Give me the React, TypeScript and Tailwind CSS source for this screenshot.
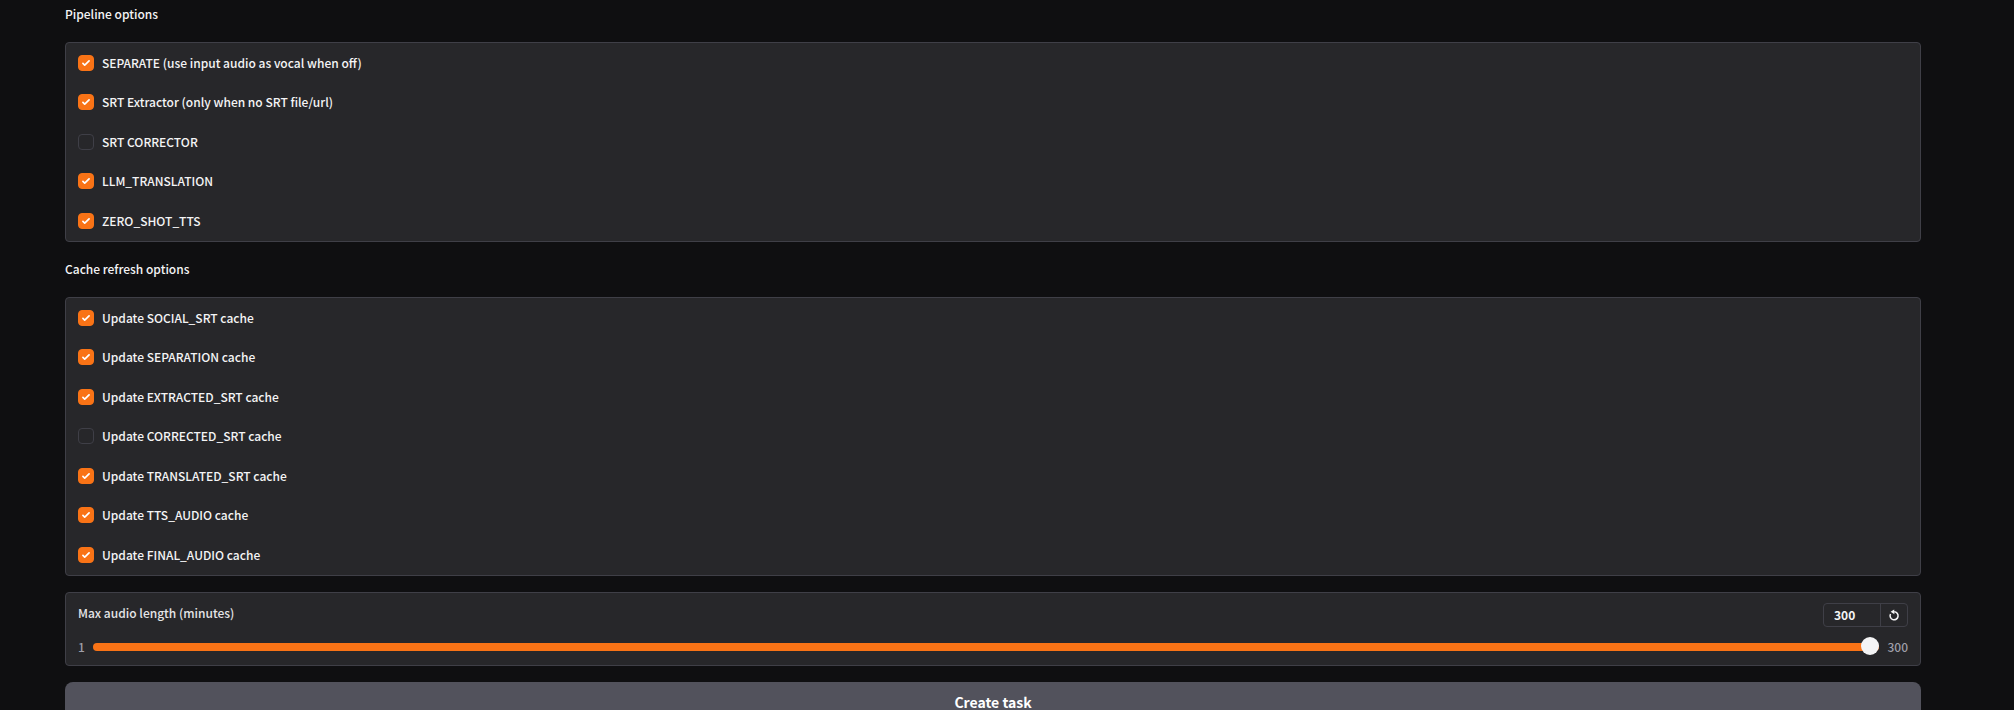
import { useState } from "react";
import type { CSSProperties } from "react";

type Option = { label: string; checked: boolean };

const pipelineOptions: Option[] = [
  { label: "SEPARATE (use input audio as vocal when off)", checked: true },
  { label: "SRT Extractor (only when no SRT file/url)", checked: true },
  { label: "SRT CORRECTOR", checked: false },
  { label: "LLM_TRANSLATION", checked: true },
  { label: "ZERO_SHOT_TTS", checked: true },
];

const cacheOptions: Option[] = [
  { label: "Update SOCIAL_SRT cache", checked: true },
  { label: "Update SEPARATION cache", checked: true },
  { label: "Update EXTRACTED_SRT cache", checked: true },
  { label: "Update CORRECTED_SRT cache", checked: false },
  { label: "Update TRANSLATED_SRT cache", checked: true },
  { label: "Update TTS_AUDIO cache", checked: true },
  { label: "Update FINAL_AUDIO cache", checked: true },
];

const MIN = 1;
const MAX = 300;

function CheckRow({ label, checked }: Option) {
  return (
    <label className="mb-[23px] flex h-4 items-center gap-2 last:mb-0 even:mb-6">
      <span className="grid size-4 place-items-center">
        <input
          type="checkbox"
          defaultChecked={checked}
          className="peer size-4 appearance-none rounded-sm border border-zinc-700 bg-zinc-800 [grid-area:1/1] checked:border-[#f97316] checked:bg-[#f97316]"
        />
        <svg
          viewBox="0 0 16 16"
          aria-hidden="true"
          className="pointer-events-none invisible size-[14px] fill-white [grid-area:1/1] peer-checked:visible"
        >
          <path d="M12.207 4.793a1 1 0 010 1.414l-5 5a1 1 0 01-1.414 0l-2-2a1 1 0 011.414-1.414L6.5 9.086l4.293-4.293a1 1 0 011.414 0z" />
        </svg>
      </span>
      <span className="pb-px">{label}</span>
    </label>
  );
}

function OptionGroup({ title, options }: { title: string; options: Option[] }) {
  return (
    <section>
      <h2 className="mb-[18px] leading-5 font-medium">{title}</h2>
      <div className="rounded border border-zinc-700 bg-[#27272a] p-3">
        {options.map((option) => (
          <CheckRow key={option.label} {...option} />
        ))}
      </div>
    </section>
  );
}

function ResetIcon() {
  return (
    <svg viewBox="0 0 12 12" aria-hidden="true" className="size-3" fill="none">
      <path d="M2.5 5A4 4 0 1 0 6.2 2.8" stroke="currentColor" strokeWidth="1.5" />
      <path d="M2.6 2.8 6.2 0.4 6.4 5.2Z" fill="currentColor" />
    </svg>
  );
}

function LengthSlider() {
  const [value, setValue] = useState(MAX);
  const fill = `${((value - MIN) / (MAX - MIN)) * 100}%`;
  return (
    <div className="mt-4 rounded border border-zinc-700 bg-[#27272a] px-3 pt-[10px] pb-2">
      <div className="flex items-start justify-between">
        <label htmlFor="max-length" className="leading-5 text-zinc-200">
          Max audio length (minutes)
        </label>
        <div className="flex h-6 overflow-hidden rounded border border-zinc-700">
          <input
            type="number"
            aria-label="Max audio length value"
            min={MIN}
            max={MAX}
            value={value}
            onChange={(e) => setValue(Number(e.target.value))}
            className="w-14 [appearance:textfield] bg-transparent pl-[10px] font-bold outline-none [&::-webkit-inner-spin-button]:appearance-none"
          />
          <button
            type="button"
            aria-label="Reset to default"
            onClick={() => setValue(MAX)}
            className="flex w-[27px] items-center justify-center border-l border-zinc-700"
          >
            <ResetIcon />
          </button>
        </div>
      </div>
      <div className="mt-[10px] flex h-5 items-center gap-2 text-zinc-400">
        <span>{MIN}</span>
        <input
          id="max-length"
          type="range"
          min={MIN}
          max={MAX}
          value={value}
          onChange={(e) => setValue(Number(e.target.value))}
          style={{ "--fill": fill } as CSSProperties}
          className="h-2 min-w-0 flex-1 appearance-none rounded bg-[linear-gradient(to_right,#f97316_var(--fill),#3f3f46_var(--fill))] [&::-webkit-slider-runnable-track]:h-2 [&::-webkit-slider-thumb]:-mt-[6px] [&::-webkit-slider-thumb]:size-[18px] [&::-webkit-slider-thumb]:appearance-none [&::-webkit-slider-thumb]:rounded-full [&::-webkit-slider-thumb]:bg-zinc-100"
        />
        <span>{MAX}</span>
      </div>
    </div>
  );
}

export default function App() {
  return (
    <main className="h-screen overflow-hidden bg-[#0f0f11] pt-1 pr-[93px] pl-[65px] font-['Noto_Sans_CJK_SC','Noto_Sans',sans-serif] text-xs font-medium text-zinc-100">
      <OptionGroup title="Pipeline options" options={pipelineOptions} />
      <div className="h-[17px]" />
      <OptionGroup title="Cache refresh options" options={cacheOptions} />
      <LengthSlider />
      <button
        type="button"
        className="mt-4 h-10 w-full rounded-lg bg-zinc-600 text-sm font-bold text-white"
      >
        Create task
      </button>
    </main>
  );
}
